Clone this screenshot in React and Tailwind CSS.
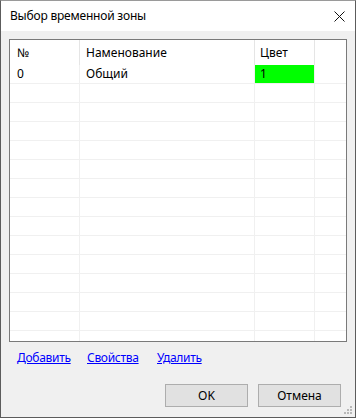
import React from 'react';

const rows = Array.from({ length: 15 });

const Grip = () => (
  <svg className="absolute right-[2px] bottom-[2px]" width="10" height="10" viewBox="0 0 10 10">
    {[
      [7, 1],
      [4, 4], [7, 4],
      [1, 7], [4, 7], [7, 7],
    ].map(([x, y], i) => (
      <rect key={i} x={x} y={y} width="2" height="2" fill="#b8b8b8" />
    ))}
  </svg>
);

export default function App() {
  return (
    <div
      className="relative w-[356px] h-[418px] flex flex-col bg-[#f0f0f0] border border-[#5c5c5c] border-t-[#9a9a9a] text-[12px] text-black"
      style={{ fontFamily: '"Noto Sans", "Liberation Sans", sans-serif' }}
    >
      {/* Title bar */}
      <div className="h-[30px] bg-white flex items-center justify-between pl-[9px] pr-[10px] shrink-0">
        <span className="leading-none tracking-[-0.2px]">Выбор временной зоны</span>
        <svg width="11" height="11" viewBox="0 0 11 11">
          <path d="M0.5 0.5 L10.5 10.5 M10.5 0.5 L0.5 10.5" stroke="#111" strokeWidth="1" />
        </svg>
      </div>

      {/* Body */}
      <div className="flex-1 flex flex-col px-[8px] pt-[8px]">
        <div className="h-[303px] border border-[#7a7a7a] bg-white overflow-hidden">
          {/* header */}
          <div className="flex h-[25px] items-center">
            <div className="w-[70px] h-full flex items-center pl-[7px] border-r border-[#e5e5e5]">№</div>
            <div className="w-[175px] h-full flex items-center pl-[6px] border-r border-[#e5e5e5]">Наменование</div>
            <div className="w-[60px] h-full flex items-center pl-[5px] border-r border-[#e5e5e5]">Цвет</div>
            <div className="flex-1" />
          </div>
          {rows.map((_, i) => (
            <div key={i} className="flex h-[19px] border-b border-[#f0f0f0]">
              <div className="w-[70px] flex items-center pl-[7px] border-r border-[#f0f0f0]">{i === 0 ? '0' : ''}</div>
              <div className="w-[175px] flex items-center pl-[6px] border-r border-[#f0f0f0]">{i === 0 ? 'Общий' : ''}</div>
              <div className={`w-[60px] flex items-center pl-[5px] border-r border-[#f0f0f0] ${i === 0 ? 'bg-[#00ff00]' : ''}`}>
                {i === 0 ? '1' : ''}
              </div>
              <div className="flex-1" />
            </div>
          ))}
        </div>

        {/* Links */}
        <div className="flex pl-[8px] mt-[8px] leading-[16px] text-[#0000ff] tracking-[-0.3px]">
          <span className="w-[70px]"><span className="underline">Добавить</span></span>
          <span className="w-[70px]"><span className="underline">Свойства</span></span>
          <span className="underline">Удалить</span>
        </div>

        {/* Buttons */}
        <div className="flex justify-end gap-[10px] mt-[18px] pr-[6px]">
          <button className="w-[83px] h-[23px] bg-[#e1e1e1] border border-[#adadad]">OK</button>
          <button className="w-[83px] h-[23px] bg-[#e1e1e1] border border-[#adadad]">Отмена</button>
        </div>
      </div>
      <Grip />
    </div>
  );
}
